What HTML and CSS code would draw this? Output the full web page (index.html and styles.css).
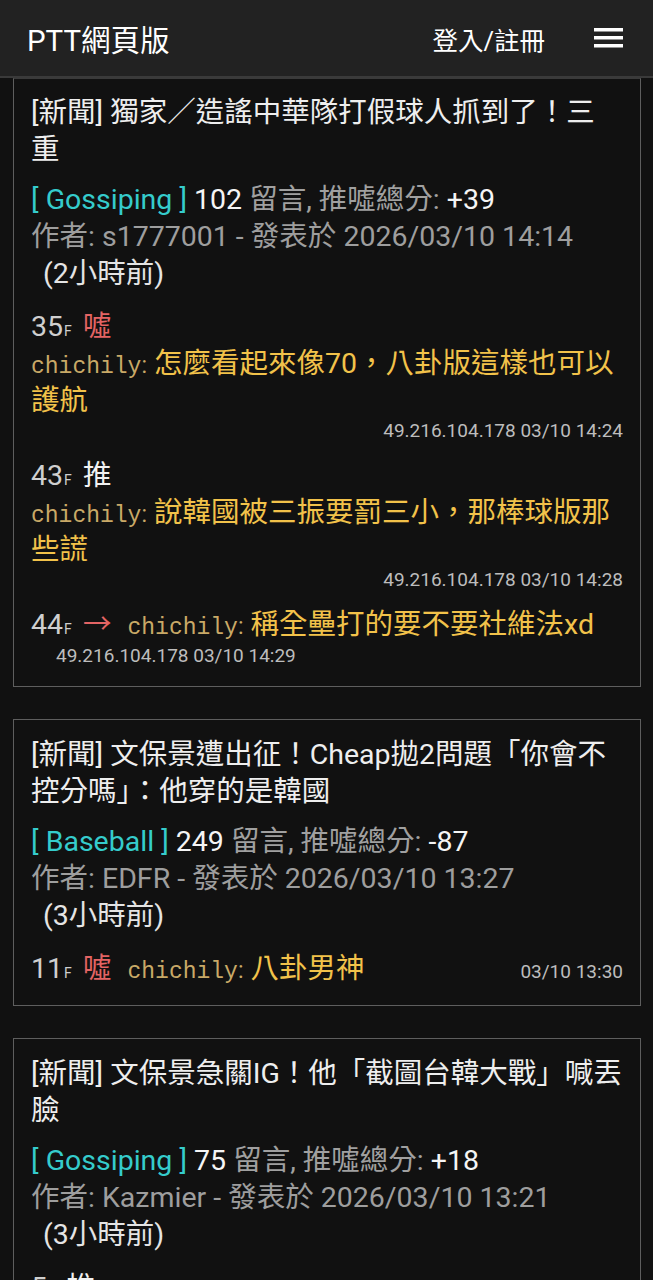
FILE: index.html
```html
<!DOCTYPE html>
<html lang="zh-Hant">
<head>
<meta charset="utf-8">
<title>PTT網頁版</title>
<link rel="stylesheet" href="styles.css">
</head>
<body>
<header class="topbar">
  <div class="brand">PTT網頁版</div>
  <div class="actions">
    <a class="login">登入/註冊</a>
    <svg class="menu" width="29" height="20" viewBox="0 0 29 20"><rect x="0" y="0" width="29" height="3.5" fill="#fff"/><rect x="0" y="8" width="29" height="3.5" fill="#fff"/><rect x="0" y="16" width="29" height="3.5" fill="#fff"/></svg>
  </div>
</header>
<main class="list">
  <article class="card">
    <h2 class="title">[新聞] 獨家／造謠中華隊打假球人抓到了！三重</h2>
    <div class="info"><span class="board">[ Gossiping ]</span> <span class="num">102</span> <span class="dim">留言, 推噓總分:</span> <span class="num">+39</span></div>
    <div class="meta">作者: s1777001 - 發表於 2026/03/10 14:14</div>
    <div class="ago">(2小時前)</div>
    <div class="comment first">
      <div class="chead"><span class="floor">35<small>F</small></span> <span class="tag boo">噓</span></div>
      <div class="ctext"><span class="user">chichily</span><span class="colon">:</span> 怎麼看起來像70，八卦版這樣也可以護航</div>
      <div class="ip right">49.216.104.178 03/10 14:24</div>
    </div>
    <div class="comment">
      <div class="chead"><span class="floor">43<small>F</small></span> <span class="tag push">推</span></div>
      <div class="ctext"><span class="user">chichily</span><span class="colon">:</span> 說韓國被三振要罰三小，那棒球版那些謊</div>
      <div class="ip right">49.216.104.178 03/10 14:28</div>
    </div>
    <div class="comment">
      <div class="ctext"><span class="floor">44<small>F</small></span> <span class="tag arrow">→</span> <span class="user inline">chichily</span><span class="colon">:</span> 稱全壘打的要不要社維法xd</div>
      <div class="ip indent">49.216.104.178 03/10 14:29</div>
    </div>
  </article>

  <article class="card">
    <h2 class="title">[新聞] 文保景遭出征！Cheap拋2問題「你會不控分嗎」：他穿的是韓國</h2>
    <div class="info"><span class="board">[ Baseball ]</span> <span class="num">249</span> <span class="dim">留言, 推噓總分:</span> <span class="num">-87</span></div>
    <div class="meta">作者: EDFR - 發表於 2026/03/10 13:27</div>
    <div class="ago">(3小時前)</div>
    <div class="comment first row">
      <div class="ctext"><span class="floor">11<small>F</small></span> <span class="tag boo">噓</span> <span class="user inline">chichily</span><span class="colon">:</span> 八卦男神</div>
      <div class="ip">03/10 13:30</div>
    </div>
  </article>

  <article class="card">
    <h2 class="title">[新聞] 文保景急關IG！他「截圖台韓大戰」喊丟臉</h2>
    <div class="info"><span class="board">[ Gossiping ]</span> <span class="num">75</span> <span class="dim">留言, 推噓總分:</span> <span class="num">+18</span></div>
    <div class="meta">作者: Kazmier - 發表於 2026/03/10 13:21</div>
    <div class="ago">(3小時前)</div>
    <div class="comment first">
      <div class="chead"><span class="floor">5<small>F</small></span> <span class="tag push">推</span></div>
      <div class="ctext"><span class="user">chichily</span><span class="colon">:</span> 丟臉丟到國外去了</div>
      <div class="ip right">49.216.104.178 03/10 13:40</div>
    </div>
  </article>
</main>
</body>
</html>
```

FILE: styles.css
```css
html, body {
  margin: 0;
  padding: 0;
  background: #111111;
}
body {
  font-family: Roboto, "Noto Sans CJK TC", sans-serif;
  color: #eeeeee;
}
.topbar {
  height: 78px;
  background: #222222;
  border-bottom: 2px solid #3a3a3a;
  display: flex;
  align-items: center;
  justify-content: space-between;
  padding: 0 30px 0 27px;
  box-sizing: border-box;
}
.brand {
  font-size: 29.5px;
  color: #ffffff;
}
.actions {
  display: flex;
  align-items: center;
  gap: 49px;
}
.login {
  font-size: 25.5px;
  color: #ffffff;
}
.menu {
  display: block;
}
.list {
  padding: 0 12px 0 13px;
}
.card {
  background: #111111;
  border: 1px solid #5e5e5e;
  padding: 16px 17px 18px;
  margin-bottom: 32px;
  font-size: 28.5px;
  line-height: 37px;
}
.card:first-child {
  border-top-color: #3a3a3a;
  padding-top: 15px;
}
.title {
  margin: 0;
  font-weight: normal;
  font-size: 28.5px;
  line-height: 37px;
  color: #eeeeee;
}
.info {
  margin-top: 13px;
  color: #f2f2f2;
}
.board {
  color: #35cccc;
}
.dim {
  color: #a0a0a0;
}
.num {
  color: #f5f5f5;
}
.meta {
  color: #9e9e9e;
}
.ago {
  color: #e4e4e4;
  padding-left: 12px;
}
.comment {
  margin-top: 14px;
}
.comment.first {
  margin-top: 16px;
}
.floor {
  color: #cfcfcf;
  margin-right: 4px;
}
.floor small {
  font-size: 14px;
  line-height: 1;
  margin-left: 1px;
}
.tag.boo, .tag.arrow {
  color: #e36464;
}
.tag.push {
  color: #f2f2f2;
}
.ctext {
  color: #f2c24a;
}
.user {
  font-family: "Liberation Mono", monospace;
  font-size: 23px;
  line-height: 1;
  color: #c9a967;
}
.user.inline {
  margin-left: 9px;
}
.colon {
  color: #c9a967;
  font-size: 23px;
  line-height: 1;
}
.ip {
  font-size: 19px;
  line-height: 24px;
  color: #bdbdbd;
}
.ip.right {
  text-align: right;
}
.ip.indent {
  padding-left: 25px;
  margin-top: 1px;
}
.comment.row {
  display: flex;
  justify-content: space-between;
  align-items: baseline;
}
```
